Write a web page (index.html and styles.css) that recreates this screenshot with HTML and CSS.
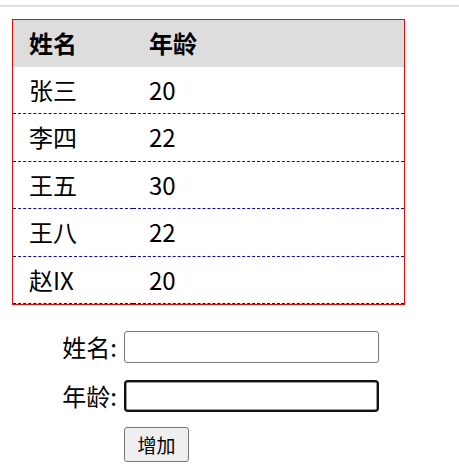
FILE: index.html
```html
<!DOCTYPE html>
<html lang="zh-CN">
<head>
<meta charset="utf-8">
<title>人员列表</title>
<link rel="stylesheet" href="styles.css">
</head>
<body>
<div class="topline"></div>
<main class="page">
  <table class="people">
    <thead>
      <tr><th class="col-name">姓名</th><th>年龄</th></tr>
    </thead>
    <tbody>
      <tr><td>张三</td><td>20</td></tr>
      <tr><td>李四</td><td>22</td></tr>
      <tr><td>王五</td><td>30</td></tr>
      <tr><td>王八</td><td>22</td></tr>
      <tr><td>赵IX</td><td>20</td></tr>
    </tbody>
  </table>
  <form class="add-form">
    <div class="form-row row-name">
      <label class="lbl" for="name">姓名:</label>
      <input class="field" id="name" type="text">
    </div>
    <div class="form-row row-age">
      <label class="lbl" for="age">年龄:</label>
      <input class="field field-focus" id="age" type="text">
    </div>
    <div class="form-row">
      <span class="lbl"></span>
      <button class="btn" type="button">增加</button>
    </div>
  </form>
</main>
</body>
</html>
```

FILE: styles.css
```css
html, body {
  margin: 0;
  padding: 0;
  background: #fff;
}
body {
  font-family: "Noto Sans CJK SC", "Noto Sans", sans-serif;
  color: #000;
}
.topline {
  height: 2px;
  margin-top: 5px;
  background: #dddddd;
}
.page {
  padding: 12px 0 0 12px;
}
.people {
  width: 393px;
  border: 1px solid #ff0000;
  border-spacing: 0;
  font-size: 24px;
}
.people th,
.people td {
  text-align: left;
  padding: 8px 16px;
  vertical-align: middle;
}
.people th {
  background: #dddddd;
  font-weight: bold;
  line-height: 30.67px;
}
.people td {
  line-height: 30.5px;
  border-bottom: 1px dashed #0000ff;
}
.people .col-name {
  width: 88px;
}
.add-form {
  display: flex;
  flex-direction: column;
  margin: 26px 0 0 45px;
}
.form-row {
  display: flex;
  align-items: center;
  column-gap: 7px;
}
.row-name {
  margin-bottom: 17px;
}
.row-age {
  margin-bottom: 15px;
}
.lbl {
  width: 60px;
  text-align: right;
  font-size: 24px;
  line-height: 32px;
  white-space: nowrap;
}
.field {
  box-sizing: border-box;
  width: 255px;
  height: 32px;
  margin: 0;
  border: 1px solid #767676;
  border-radius: 3px;
  background: #fff;
  font-size: 16px;
  padding: 0 4px;
}
.field-focus {
  border: 2px solid #101010;
  box-shadow: inset 0 0 0 1px #9a9a9a;
  border-radius: 4px;
}
.btn {
  box-sizing: border-box;
  width: 65px;
  height: 35px;
  margin: 0;
  padding: 0;
  border: 1px solid #767676;
  border-radius: 3px;
  background: #efefef;
  color: #000;
  font-family: "Noto Sans CJK SC", sans-serif;
  font-size: 19px;
}
```
